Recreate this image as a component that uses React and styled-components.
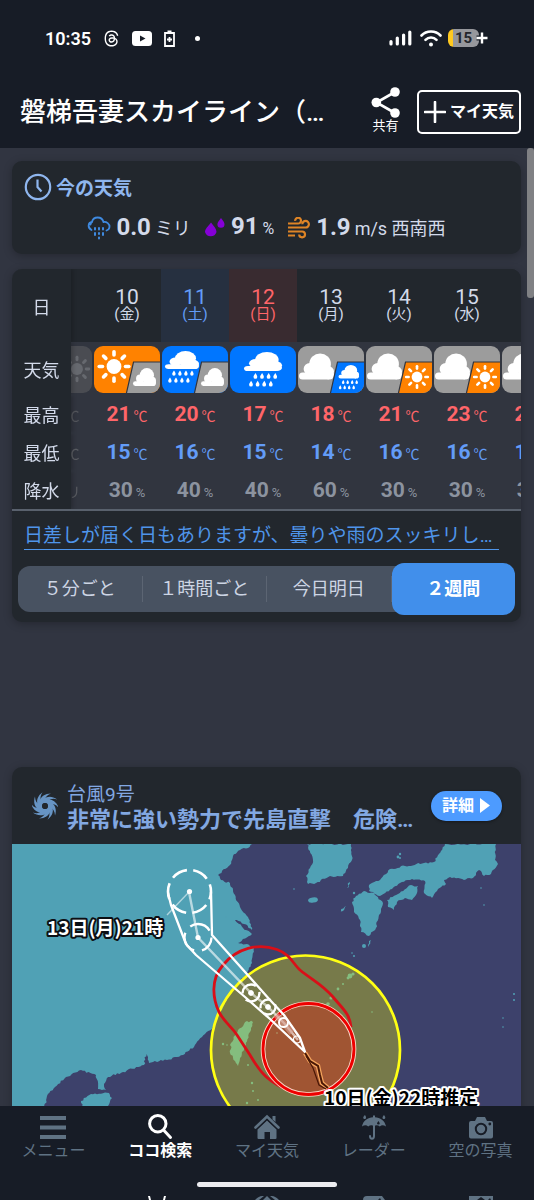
import React, { useLayoutEffect, useRef } from 'react'
import styled, { createGlobalStyle } from 'styled-components'
import { FaThreads } from 'react-icons/fa6'

const days = [
    { date: '9', week: '木', kind: 'past', icon: 'past', high: 20, low: 16, rain: 0, unit: 'ミリ' },
    { date: '10', week: '金', icon: 'sunCloud', high: 21, low: 15, rain: 30 },
    { date: '11', week: '土', kind: 'sat', icon: 'rainCloud', high: 20, low: 16, rain: 40 },
    { date: '12', week: '日', kind: 'sun', icon: 'rain', high: 17, low: 15, rain: 40 },
    { date: '13', week: '月', icon: 'cloudRain', high: 18, low: 14, rain: 60 },
    { date: '14', week: '火', icon: 'cloudSun', high: 21, low: 16, rain: 30 },
    { date: '15', week: '水', icon: 'cloudSun', high: 23, low: 16, rain: 30 },
    { date: '16', week: '木', icon: 'cloudSun', high: 22, low: 15, rain: 30 },
]

const tabs = ['５分ごと', '１時間ごと', '今日明日', '２週間']

// weather tiles

const Sun = ({ x, y, s = 1, fill = '#fff' }) => (
    <g transform={`translate(${x} ${y}) scale(${s})`} fill={fill} stroke={fill}>
        <circle r="7.4" stroke="none" />
        {[0, 45, 90, 135, 180, 225, 270, 315].map(a => (
            <path key={a} d="M0 -11.5V-14.8" strokeWidth="3.6" strokeLinecap="round" transform={`rotate(${a})`} />
        ))}
    </g>
)

const Cloud = ({ x, y, w, h }) => (
    <g transform={`translate(${x} ${y}) scale(${w / 34} ${h / 26})`} fill="#fff">
        <circle cx="20.5" cy="10.5" r="10.5" />
        <circle cx="10.5" cy="15.5" r="6" />
        <circle cx="28.3" cy="18.3" r="5.7" />
        <path d="M3.5 19H29V26H3.5A3.5 3.5 0 0 1 3.5 19Z" />
        <circle cx="29.5" cy="21.5" r="4.5" />
    </g>
)

const Drops = ({ x, y, s = 1 }) => (
    <g transform={`translate(${x} ${y}) scale(${s})`} fill="#fff">
        {[[3, 0], [9, 0], [15, 0], [21, 0], [-1, 7], [5, 7], [11, 7], [17, 7]].map(([a, b]) => (
            <path key={`${a}-${b}`} transform={`translate(${a} ${b})`} d="M2 0C3 1.6 3.6 2.6 3.6 3.6A1.7 1.7 0 0 1 .2 3.6C.2 2.6 1 1.6 2 0Z" />
        ))}
    </g>
)

const base = { past: '#6d7078', sunCloud: '#ff8200', rainCloud: '#0076ff', rain: '#0076ff', cloudRain: '#9c9c9c', cloudSun: '#9c9c9c' }
const second = { sunCloud: '#9c9c9c', rainCloud: '#9c9c9c', cloudRain: '#0076ff', cloudSun: '#ff8200' }

function WeatherIcon({ type }) {
    return (
        <Tile viewBox="0 0 66 47" $fill={base[type]} role="img" aria-label={type}>
            {type === 'past' && <Sun x={51} y={23} s={0.8} fill="#b4b7bc" />}
            {type === 'sunCloud' && <Sun x={20} y={20.5} />}
            {type === 'rainCloud' && <><Cloud x={3} y={5} w={34} h={18} /><Drops x={7} y={24.5} /></>}
            {type === 'rain' && <><Cloud x={14} y={6} w={38} h={19} /><Drops x={20} y={27} s={1.1} /></>}
            {type.startsWith('cloud') && <Cloud x={1} y={7.5} w={35} h={26} />}
            {second[type] && <path d="M39.5 16H68V49H32Z" fill={second[type]} stroke="#31353f" strokeWidth="1.2" />}
            {(type === 'sunCloud' || type === 'rainCloud') && <Cloud x={39} y={22} w={23} h={18} />}
            {type === 'cloudRain' && <><Cloud x={40.5} y={19} w={20.5} h={13.5} /><Drops x={41.5} y={34} s={0.75} /></>}
            {type === 'cloudSun' && <Sun x={51} y={31} s={0.73} />}
        </Tile>
    )
}

// adds small bays and capes between the given coast points
function coast(points) {
    const out = []
    points.forEach(([x, y], i) => {
        const [nx, ny] = points[(i + 1) % points.length]
        const len = Math.hypot(nx - x, ny - y)
        const steps = Math.max(1, Math.min(16, Math.round(len / 2)))
        if (len > 60) {
            out.push([x, y])
            return
        }
        for (let k = 0; k < steps; k++) {
            const r = Math.sin((i * 17 + k) * 12.9898) * 43758.5453
            const d = k === 0 ? 0 : (r - Math.floor(r) - 0.5) * 2
            out.push([x + (nx - x) * k / steps - (ny - y) / (len || 1) * d, y + (ny - y) * k / steps + (nx - x) / (len || 1) * d])
        }
    })
    return out.map(p => p.map(v => v.toFixed(1)).join(',')).join(' ')
}

const lands = [
    [[12, 844], [252, 844], [248, 848], [240, 850], [233, 856], [230, 865], [218, 875], [221, 880], [230, 883], [235, 895], [240, 907], [248, 917], [252, 930], [244, 924], [233, 918], [243, 928], [252, 934], [238, 943], [247, 944], [254, 948], [252, 963], [247, 973], [234, 988], [225, 1002], [219, 1015], [212, 1029], [202, 1037], [194, 1047], [183, 1055], [167, 1060], [149, 1063], [146, 1054], [144, 1065], [123, 1072], [108, 1077], [104, 1084], [106, 1090], [98, 1089], [96, 1075], [81, 1070], [66, 1077], [55, 1087], [47, 1096], [44, 1110], [44, 1150], [12, 1150]],
    [[81, 1101], [91, 1094], [109, 1093], [112, 1098], [108, 1106], [98, 1112], [83, 1110]],
    [[307, 844], [351, 844], [352, 860], [348, 868], [343, 876], [330, 876], [316, 883], [308, 884], [306, 876], [310, 868], [313, 860]],
    [[352, 902], [356, 896], [364, 891], [374, 893], [383, 903], [379, 915], [376, 928], [369, 936], [361, 932], [360, 920], [354, 912]],
    [[434, 862], [441, 851], [445, 844], [496, 844], [495, 860], [498, 864], [491, 874], [484, 876], [479, 870], [473, 878], [464, 880], [450, 877], [444, 880], [446, 884], [438, 889], [432, 898], [424, 893], [425, 881], [412, 879], [400, 883], [392, 889], [380, 896], [369, 891], [369, 885], [380, 880], [390, 869], [405, 866], [424, 863]],
    [[387, 900], [398, 894], [411, 885], [418, 886], [417, 893], [412, 900], [405, 898], [397, 902], [394, 910], [388, 907]],
    [[247, 1021], [253, 1022], [251, 1030], [246, 1045], [240, 1058], [238, 1066], [235, 1061], [230, 1053], [231, 1043], [238, 1030]],
    [[369, 941], [371, 940], [369, 947], [368, 945]],
    [[347, 888], [350, 880], [349, 887]],
    [[339, 912], [346, 906], [343, 911]],
]

const islets = [[350, 976, 2.4], [353, 974, 1.6], [348, 978, 1.4], [343, 984, 1], [338, 989, 1.4], [331, 998, 1.6], [328, 1004, 1.8], [364, 946, 2], [354, 956, 1], [352, 953, .8], [398, 857, 1.4], [400, 854, 1.2], [400, 858, 1], [481, 888, .8], [484, 905, .8], [514, 994, 1], [514, 1000, 1], [503, 1018, .8], [503, 1027, .8], [223, 1044, 1.2], [227, 1045, .8], [248, 1065, 1], [252, 1083, 1.2], [253, 1091, 1], [247, 1103, 1.2], [258, 1100, 1], [277, 1033, 1], [226, 917, 1], [354, 893, 1.2], [294, 889, .8], [372, 1012, .8]]

function TyphoonMap() {
    return (
        <MapSvg viewBox="12 844 509 300" role="img" aria-label="台風9号の進路予想">
            <rect x="12" y="844" width="510" height="300" fill="#3d416b" />
            <g fill="#50a1b5">
                {lands.map((l, i) => <polygon key={i} points={coast(l)} />)}
                {islets.map(([x, y, r], i) => <circle key={i} cx={x} cy={y} r={r} />)}
                <ellipse cx="313" cy="900" rx="5" ry="2.6" transform="rotate(-10 313 900)" />
            </g>
            <circle cx="305.5" cy="1050" r="94.5" fill="#ff0" fillOpacity=".3" />
            <circle cx="305.5" cy="1050" r="94.5" fill="none" stroke="#ffff14" strokeWidth="2.7" />
            <circle cx="308.5" cy="1049" r="45.5" fill="#f00" fillOpacity=".3" />
            <path d="M351 1027C350 1014 342 1008 333 997C322 984 312 980 300 970C294 965 290 954 277 949.5C258 943 237 948 223 965C210 980 213 999 219 1012C225 1023 231 1026 237 1035L250 1055C260 1072 268 1083 293 1092" fill="none" stroke="#d90f18" strokeWidth="2.8" />
            <circle cx="308.5" cy="1049" r="45.5" fill="none" stroke="#fbd9c8" strokeWidth="4.6" />
            <circle cx="308.5" cy="1049" r="45.5" fill="none" stroke="#e00" strokeWidth="2.8" />
            <g fill="none" stroke="#fff">
                <path d="M189 892L198 937.5L251 993L268 1007L284 1023L298 1040" strokeWidth="2.4" strokeOpacity=".6" />
                <path d="M189 892L167 915" strokeWidth="1.4" strokeOpacity=".55" />
                <circle cx="189.5" cy="891.5" r="21.5" strokeWidth="2.6" strokeDasharray="16 6.5" strokeDashoffset="8" />
                <path d="M168 893L171 905L186 944L196 955L245 997L270 1019L305 1052L300 1038L284 1015L270 1000L212 935L211 892" strokeWidth="2.3" strokeLinejoin="round" />
                <circle cx="198" cy="937.5" r="13.5" strokeWidth="2.3" strokeDasharray="22 8" strokeDashoffset="35" />
                <circle cx="251" cy="993" r="8.5" strokeWidth="2.4" strokeDasharray="19 7" />
                <circle cx="251" cy="993" r="2.4" fill="#fff" />
                <circle cx="268" cy="1007" r="7.5" strokeWidth="2.3" strokeDasharray="16 6" />
                <circle cx="268" cy="1007" r="2.4" fill="#fff" />
                <path d="M276 1015L283 1022L292 1033" stroke="#d9a597" strokeWidth="6" strokeOpacity=".6" />
                <circle cx="283.5" cy="1022.5" r="4.5" strokeWidth="2" />
                <circle cx="297" cy="1039.5" r="3.5" strokeWidth="1.2" />
            </g>
            <circle cx="189.5" cy="891.5" r="2.6" fill="#fff" />
            <circle cx="198" cy="937.5" r="2.6" fill="#fff" />
            <path d="M305 1053L310 1061L318 1066L320 1075L322 1083L328 1088" fill="none" stroke="#f7a65e" strokeWidth="4.5" />
            <path d="M305 1053L310 1061L318 1066L320 1075L322 1083L328 1088" fill="none" stroke="#4a1806" strokeWidth="2" />
            <path d="M306 1056L313 1068L319 1085L326 1089" fill="none" stroke="#4a1806" strokeWidth="1.2" />
            <MapLabel x="47" y="935" fill="#fff" stroke="#0c0f14">13日(月)21時</MapLabel>
            <MapLabel x="324" y="1105" fill="#000" stroke="#fff">10日(金)22時推定</MapLabel>
        </MapSvg>
    )
}

function StatusBar() {
    return (
        <Status>
            <Clock>10:35</Clock>
            <FaThreads size={17} />
            <svg width="20" height="15" viewBox="0 0 20 15"><rect width="20" height="15" rx="3.5" fill="#fff" /><path d="M8 4.5L13.5 7.5L8 10.5Z" fill="#171c26" /></svg>
            <svg width="11" height="17" viewBox="0 0 11 17"><path d="M1 3H10V16H1ZM3.5 1.5H7.5M5.5 7V12M3 9.5H8" fill="none" stroke="#fff" strokeWidth="1.8" /></svg>
            <Dot />
            <Spacer />
            <Radio>
                <svg width="23" height="16" viewBox="0 0 23 16"><path d="M2 11.5V14M8.3 8V14M14.6 5V14M20.8 2V14" stroke="#fff" strokeWidth="3.2" strokeLinecap="round" /></svg>
                <svg width="22" height="17" viewBox="0 0 22 17" fill="none" stroke="#fff" strokeWidth="2.6" strokeLinecap="round"><path d="M1.5 5.5C6.5 .2 15.5 .2 20.5 5.5M5.5 9.8C8.5 6.8 13.5 6.8 16.5 9.8" /><circle cx="11" cy="14.5" r="2" fill="#fff" stroke="none" /></svg>
            </Radio>
            <Battery>
                <b>15</b>
                <svg width="12" height="12" viewBox="0 0 12 12"><path d="M6 .5V11.5M.5 6H11.5" stroke="#171c26" strokeWidth="5" /><path d="M6 .5V11.5M.5 6H11.5" stroke="#fff" strokeWidth="2.4" /></svg>
            </Battery>
        </Status>
    )
}

function Header() {
    return (
        <HeaderBox>
            <StatusBar />
            <TitleRow>
                <h1>磐梯吾妻スカイライン（福島県）</h1>
                <ShareButton>
                    <svg width="29" height="31" viewBox="0 0 29 31"><path d="M24 5L5.5 15.5L24 26" fill="none" stroke="#fff" strokeWidth="2.6" /><g fill="#fff"><circle cx="24" cy="5" r="4.8" /><circle cx="5.3" cy="15.5" r="4.8" /><circle cx="24" cy="26" r="4.8" /></g></svg>
                    共有
                </ShareButton>
                <MyButton>
                    <svg width="22" height="22" viewBox="0 0 22 22"><path d="M11 1V21M1 11H21" stroke="#fff" strokeWidth="2.6" strokeLinecap="round" /></svg>
                    マイ天気
                </MyButton>
            </TitleRow>
        </HeaderBox>
    )
}

function CurrentWeather() {
    return (
        <Card>
            <CardHeading>
                <svg width="28" height="28" viewBox="0 0 28 28" fill="none" stroke="#8fb6ee" strokeWidth="2.2"><circle cx="14" cy="14" r="12.2" /><path d="M13.5 6.5V14L17.5 18.5" /></svg>
                今の天気
            </CardHeading>
            <Values>
                <svg width="24" height="24" viewBox="0 0 24 24" fill="none" stroke="#3f8ae0" strokeWidth="1.8" strokeLinecap="round"><path d="M4.5 14C.2 11.5 1 6.5 5 6C6.2 0 15 0 16.5 6C19.5 5.5 22.8 7.8 22.5 11C22.3 13 21 14 19.5 14.5M3.500 8.5C3.8 7 4.2 6.5 5 6" /><path strokeWidth="2" d="M8 12V13.5M12 12V13.5M16 12V13.5M8 17V19M12 17V18M16 17V19M12 21.5V22.5" /></svg>
                <Value><b>0.0</b><span>ミリ</span></Value>
                <svg width="22" height="22" viewBox="0 0 22 22" fill="#8500d6"><path d="M7 5.5C10 9.3 12.5 12 12.5 15A6 6 0 0 1 1 15C1 12 4 9.3 7 5.5Z" /><path d="M17 1C19.2 4 20.5 5.5 20.5 7.3A3.5 3.5 0 0 1 13.4 7.3C13.4 5.5 15 4 17 1Z" /></svg>
                <Value><b>91</b><small>%</small></Value>
                <svg width="24" height="22" viewBox="0 0 24 22" fill="none" stroke="#de8426" strokeWidth="2.2"><path d="M1 6.5H11A2.900 2.9 0 1 0 8.2 3.8M1 10.5H18.5A3.3 3.3 0 1 0 15.3 7.2M1 14.5H15A2.9 2.9 0 1 1 12.2 17.5M1 18.5H8" /></svg>
                <Value><b>1.9</b><span>m/s 西南西</span></Value>
            </Values>
        </Card>
    )
}

function Forecast() {
    const scroller = useRef(null)

    // today comes first, the past day stays half hidden on the left
    useLayoutEffect(() => {
        scroller.current.scrollLeft = 46
    }, [])

    return (
        <Card>
            <Scroller ref={scroller}>
                <Table>
                    <thead>
                        <tr>
                            <RowLabel scope="col">日</RowLabel>
                            {days.map(d => <DayCell key={d.date} scope="col" $kind={d.kind}>{d.date}<span>({d.week})</span></DayCell>)}
                        </tr>
                    </thead>
                    <tbody>
                        <IconRow>
                            <RowLabel scope="row">天気</RowLabel>
                            {days.map(d => <Cell key={d.date} $past={d.kind === 'past'}><WeatherIcon type={d.icon} /></Cell>)}
                        </IconRow>
                        <tr>
                            <RowLabel scope="row">最高</RowLabel>
                            {days.map(d => <Cell key={d.date} $color="#ff6569" $past={d.kind === 'past'}><b>{d.high}</b>℃</Cell>)}
                        </tr>
                        <tr>
                            <RowLabel scope="row">最低</RowLabel>
                            {days.map(d => <Cell key={d.date} $color="#639cf7" $past={d.kind === 'past'}><b>{d.low}</b>℃</Cell>)}
                        </tr>
                        <tr>
                            <RowLabel scope="row">降水</RowLabel>
                            {days.map(d => <Cell key={d.date} $color="#8c939f" $past={d.kind === 'past'}><b>{d.rain}</b>{d.unit || <small>%</small>}</Cell>)}
                        </tr>
                    </tbody>
                </Table>
            </Scroller>
            <Comment href="#">日差しが届く日もありますが、曇りや雨のスッキリしない天気の日が多くなりそうです</Comment>
            <Tabs>
                {tabs.map((t, i) => <Tab key={t} $active={i === 3}>{t}</Tab>)}
            </Tabs>
        </Card>
    )
}

function Typhoon() {
    return (
        <Card>
            <TyphoonHead>
                <svg width="26" height="28" viewBox="-13 -14 26 28">
                    {[0, 36, 72, 108, 144, 180, 216, 252, 288, 324].map(a => (
                        <path key={a} transform={`rotate(${a})`} fill="#6794c4" d="M-5 -5.500C-4 -9.5 0 -12.5 6 -12.5C2 -11 .5 -9 0 -6.5Z" />
                    ))}
                    <circle r="5.4" fill="none" stroke="#6794c4" strokeWidth="5" />
                    <circle r="2.9" fill="#22272d" />
                </svg>
                <TyphoonText>
                    <p>台風9号</p>
                    <h2>非常に強い勢力で先島直撃　危険な暴風に厳重警戒</h2>
                </TyphoonText>
                <DetailLink href="#">
                    詳細
                    <svg width="10" height="15" viewBox="0 0 10 15"><path d="M0 0L10 7.5L0 15Z" fill="#fff" /></svg>
                </DetailLink>
            </TyphoonHead>
            <TyphoonMap />
        </Card>
    )
}

const HomeShape = () => (
    <>
        <path d="M1.5 13.5L13 2.5L24.5 13.5" fill="none" stroke="currentColor" strokeWidth="2.6" strokeLinecap="round" />
        <path d="M18.5 2H21.5V8L18.5 5.5ZM13 6.5L22.5 15.5V24Q22.5 25 21.5 25H16V18H10.5V25H4.5Q3.5 25 3.5 24V15.5Z" fill="currentColor" />
        <path d="M3 15L13 5.500L23 15" fill="none" stroke="#171c26" strokeWidth="1" />
    </>
)
const UmbrellaShape = () => (
    <>
        <path d="M1 12.5C2 6.5 7 3.5 12 3.2V1.5H14V3.2C19 3.5 24 6.5 25 12.5C22.5 10.8 20.5 10.8 18.8 12.5C17 10.8 15 10.8 13 12C11 10.8 9 10.8 7.2 12.5C5.5 10.8 3.5 10.8 1 12.5ZM4 1C5.5 3 5.5 5 3.8 5C2 5 1.5 3 4 1ZM23 1C24.8 3 24.8 5 23 5C21 5 21 3 23 1Z" fill="currentColor" />
        <path d="M13 11V22Q13 24.7 11 24.7Q9 24.7 9 22" fill="none" stroke="currentColor" strokeWidth="2" strokeLinecap="round" />
        <path d="M17.5 7C19 9 19.3 10.5 17.5 10.5C15.5 10.5 15.5 9 17.5 7Z" fill="#171c26" />
    </>
)
const CameraShape = () => (
    <>
        <path d="M3 7H7L9 3H17L19 7H23Q25 7 25 9V22.5Q25 24.5 23 24.5H3Q1 24.5 1 22.5V9Q1 7 3 7Z" fill="currentColor" />
        <circle cx="13" cy="15" r="5.2" fill="none" stroke="#171c26" strokeWidth="2" />
        <circle cx="21.8" cy="10" r="1.4" fill="#171c26" />
    </>
)

const navItems = [
    { label: 'メニュー', shape: <path d="M0 2H26V6H0ZM0 11.5H26V15.5H0ZM0 21H26V25H0Z" fill="currentColor" /> },
    { label: 'ココ検索', active: true, shape: <path d="M17 16.5L23.5 23.5M19 9.7A8.2 8.2 0 1 1 2.6 9.7A8.2 8.2 0 1 1 19 9.7" fill="none" stroke="currentColor" strokeWidth="3" strokeLinecap="round" /> },
    { label: 'マイ天気', shape: <HomeShape /> },
    { label: 'レーダー', shape: <UmbrellaShape /> },
    { label: '空の写真', shape: <CameraShape /> },
]

const echoShapes = [
    null,
    'M1 0H3L4 4H2ZM17 0H19L18 4H16Z',
    'M1 4C4 1 6 0 8 0H10L5 4ZM9 4L13 0L17 4ZM16 0H18C20 0 22 1 25 4H21Z',
    'M2 4Q2 0 6 0H21L24 4H20L19 2L17 4Z',
    'M1 0H25V4H23L22 2L20 4H17L13 1L9 4H1Z',
]

function BottomNav() {
    return (
        <Footer>
            <Nav>
                {navItems.map(n => (
                    <NavLink key={n.label} href="#" $active={n.active}>
                        <svg width="26" height="26" viewBox="0 0 26 26">{n.shape}</svg>
                        {n.label}
                    </NavLink>
                ))}
            </Nav>
            <HomeBar />
            <Echo aria-hidden="true">
                {echoShapes.map((d, i) => (
                    <svg key={i} width="26" height="4" viewBox="0 0 26 4">{d && <path d={d} fill={i === 1 ? '#fff' : '#5f7283'} />}</svg>
                ))}
            </Echo>
        </Footer>
    )
}

function App() {
    return (
        <Screen>
            <GlobalStyle />
            <Header />
            <Main>
                <CurrentWeather />
                <Forecast />
                <AdSpace />
                <Typhoon />
                <ScrollThumb />
            </Main>
            <BottomNav />
        </Screen>
    )
}

export default App

const GlobalStyle = createGlobalStyle`
*{
    box-sizing:border-box;
}
body{
    margin:0;
    background:#313541;
    color:#d3daea;
    font-family:Roboto, "Noto Sans CJK JP", sans-serif;
}
h1, h2, p{
    margin:0;
}
button{
    font-family:inherit;
    cursor:pointer;
}
a{
    text-decoration:none;
}
svg{
    flex-shrink:0;
}
`

const Screen = styled.div`
height:100vh;
display:flex;
flex-direction:column;
`

const HeaderBox = styled.header`
background:#171c26;
color:#fff;
`

const Status = styled.div`
height:76px;
padding:0 48px 0 45px;
display:flex;
align-items:center;
gap:12px;
`

const Clock = styled.span`
font-size:18px;
font-weight:600;
`

const Dot = styled.i`
width:5px;
height:5px;
margin-left:8px;
border-radius:50%;
background:#fff;
`

const Spacer = styled.span`
flex:1;
`

const Radio = styled.div`
display:flex;
gap:8px;
`

const Battery = styled.div`
display:flex;
align-items:center;
margin-left:-6px;
b{
    width:31px;
    height:18px;
    border-radius:6px;
    background:linear-gradient(90deg, #ffc91f 5px, #96979c 5px);
    color:#24262c;
    font-size:15px;
    line-height:18px;
    text-align:center;
}
svg{
    margin-left:-3px;
    margin-right:-2px;
}
`

const TitleRow = styled.div`
height:72px;
padding:0 13px 0 20px;
display:flex;
align-items:center;
h1{
    flex:1;
    min-width:0;
    font-size:26px;
    font-weight:500;
    line-height:36px;
    overflow:hidden;
    white-space:nowrap;
    text-overflow:ellipsis;
}
`

const ShareButton = styled.button`
margin:0 17px 4px 29px;
padding:0;
border:0;
background:none;
color:#fff;
font-size:13px;
line-height:16px;
display:flex;
flex-direction:column;
align-items:center;
`

const MyButton = styled.button`
height:44px;
padding:0 5px;
border:2px solid #fff;
border-radius:5px;
background:#1b1f29;
color:#fff;
font-size:16px;
font-weight:700;
line-height:20px;
white-space:nowrap;
display:flex;
align-items:center;
gap:4px;
`

const Main = styled.main`
position:relative;
flex:1;
min-height:0;
overflow:hidden;
padding:13px 13px 0 12px;
display:flex;
flex-direction:column;
gap:15px;
`

const ScrollThumb = styled.div`
position:absolute;
top:0;
right:0;
width:7px;
height:150px;
border-radius:3px;
background:#808184;
`

const AdSpace = styled.div`
flex-shrink:0;
height:115px;
`

const Card = styled.section`
flex-shrink:0;
overflow:hidden;
border-radius:10px;
background:#22272d;
box-shadow:0 2px 8px rgba(0,0,0,.25);
`

const CardHeading = styled.h2`
padding:12px 12px 0;
display:flex;
align-items:center;
gap:4px;
color:#8fb6ee;
font-family:"Noto Sans CJK JP", sans-serif;
font-size:19px;
line-height:28px;
`

const Values = styled.div`
height:53px;
display:flex;
justify-content:center;
align-items:center;
gap:5px;
`

const Value = styled.div`
display:flex;
align-items:baseline;
gap:4px;
margin-right:8px;
font-size:18px;
line-height:28px;
&:last-child{
    margin-right:0;
}
b{
    font-size:24px;
}
small{
    font-size:16px;
}
`

const Scroller = styled.div`
overflow-x:auto;
scrollbar-width:none;
border-bottom:2px solid #59616d;
`

const Table = styled.table`
table-layout:fixed;
width:603px;
border-spacing:0;
background:#31353f;
tr{
    height:38px;
}
thead tr{
    height:73px;
}
`

const IconRow = styled.tr`
&&{
    height:53px;
}
`

const RowLabel = styled.th`
position:sticky;
left:0;
z-index:1;
width:59px;
padding:0;
background:#22272d;
box-shadow:2px 0 4px rgba(0,0,0,.2);
clip-path:inset(0 -6px 0 0);
font-family:"Noto Sans CJK JP", sans-serif;
font-size:18px;
font-weight:400;
line-height:20px;
`

const dayColors = {
    sat: ['#263040', '#639cf7'],
    sun: ['#392b30', '#ff6569'],
    past: ['#22272d', '#4b5059'],
}

const DayCell = styled.th`
width:68px;
padding:0;
background:${p => dayColors[p.$kind]?.[0] || '#22272d'};
color:${p => dayColors[p.$kind]?.[1] || '#d3daea'};
font-size:21px;
font-weight:400;
line-height:17px;
span{
    display:block;
    font-size:15px;
    line-height:17px;
}
`

const Cell = styled.td`
padding:2px 0 0;
text-align:center;
color:${p => p.$color};
opacity:${p => p.$past ? 0.4 : 1};
filter:${p => p.$past ? 'grayscale(1)' : 'none'};
font-size:14px;
line-height:20px;
white-space:nowrap;
b{
    margin-right:3px;
    font-size:21px;
}
small{
    font-size:13px;
}
`

const Tile = styled.svg`
display:block;
width:66px;
height:47px;
margin:0 auto;
border-radius:9px;
background:${p => p.$fill};
`

const Comment = styled.a`
display:block;
margin:12px 22px 0 12px;
border-bottom:1px solid #4f95ea;
color:#4f95ea;
font-family:Roboto, "Noto Sans CJK JP", sans-serif;
font-size:19px;
line-height:26px;
overflow:hidden;
white-space:nowrap;
text-overflow:ellipsis;
`

const Tabs = styled.div`
margin:16px 6px 10px;
height:46px;
border-radius:12px;
background:#485261;
display:flex;
align-items:center;
`

const Tab = styled.button`
flex:1;
height:${p => p.$active ? 52 : 26}px;
padding:0;
border:0;
border-right:${p => p.$active ? 0 : 1}px solid #5c6573;
border-radius:${p => p.$active ? 12 : 0}px;
background:${p => p.$active ? '#418feb' : 'none'};
color:${p => p.$active ? '#fff' : '#cdd5e4'};
font-size:18px;
font-weight:${p => p.$active ? 700 : 400};
line-height:24px;
white-space:nowrap;
`

const TyphoonHead = styled.div`
height:77px;
padding:0 19px 0 20px;
display:flex;
align-items:center;
`

const TyphoonText = styled.div`
flex:1;
min-width:0;
margin:4px 12px 0 9px;
color:#82a8e2;
p{
    font-size:19px;
    line-height:24px;
}
h2{
    font-size:22px;
    line-height:26px;
    overflow:hidden;
    white-space:nowrap;
    text-overflow:ellipsis;
}
`

const DetailLink = styled.a`
height:30px;
padding:0 12px 0 11px;
border-radius:15px;
background:#4d9bff;
box-shadow:0 1px 3px rgba(0,0,0,.4);
color:#fff;
font-size:16px;
font-weight:700;
line-height:20px;
white-space:nowrap;
display:flex;
align-items:center;
gap:6px;
`

const MapSvg = styled.svg`
display:block;
width:100%;
height:auto;
`

const MapLabel = styled.text`
font-family:"Noto Sans CJK JP", sans-serif;
font-size:19px;
font-weight:700;
stroke-width:4px;
stroke-linejoin:round;
paint-order:stroke;
`

const Footer = styled.footer`
background:#171c26;
`

const Nav = styled.nav`
display:flex;
padding-top:8px;
`

const NavLink = styled.a`
flex:1;
display:flex;
flex-direction:column;
align-items:center;
color:${p => p.$active ? '#fff' : '#5f7283'};
font-size:16px;
font-weight:${p => p.$active ? 700 : 400};
line-height:22px;
white-space:nowrap;
`

const HomeBar = styled.div`
width:140px;
height:5px;
margin:20px auto 9px;
border-radius:3px;
background:#ececf0;
`

const Echo = styled.div`
display:flex;
justify-content:space-around;
height:4px;
`
